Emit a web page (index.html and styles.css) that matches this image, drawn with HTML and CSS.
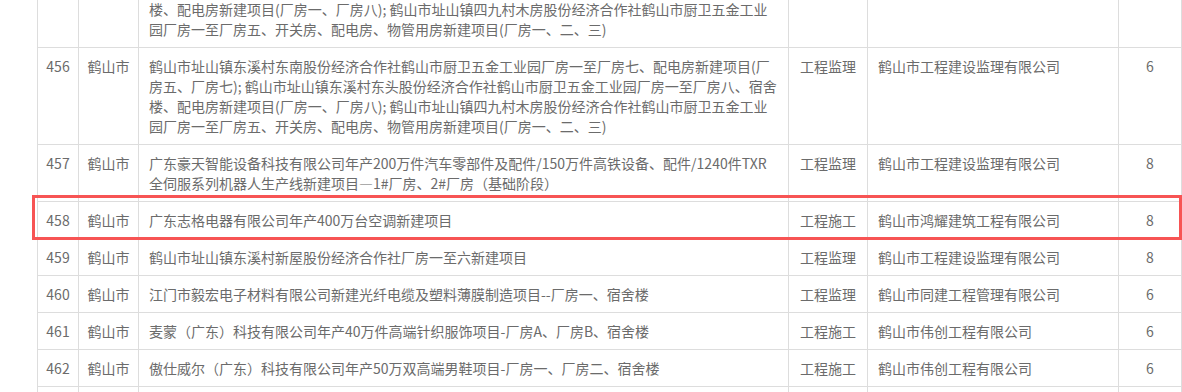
FILE: index.html
```html
<!DOCTYPE html>
<html lang="zh-CN">
<head>
<meta charset="utf-8">
<title>项目列表</title>
<link rel="stylesheet" href="styles.css">
</head>
<body>
<div class="wrap">
  <table class="list">
    <colgroup>
      <col class="c-no"><col class="c-city"><col class="c-proj"><col class="c-type"><col class="c-comp"><col class="c-num">
    </colgroup>
    <tbody>
      <tr class="partial">
        <td class="ctr"></td>
        <td class="ctr"></td>
        <td class="proj"><span class="ln">楼、配电房新建项目(厂房一、厂房八); 鹤山市址山镇四九村木房股份经济合作社鹤山市厨卫五金工业</span><br><span class="ln">园厂房一至厂房五、开关房、配电房、物管用房新建项目(厂房一、二、三)</span></td>
        <td class="ctr"></td>
        <td></td>
        <td class="ctr"></td>
      </tr>
      <tr>
        <td class="ctr">456</td>
        <td class="ctr">鹤山市</td>
        <td class="proj"><span class="ln">鹤山市址山镇东溪村东南股份经济合作社鹤山市厨卫五金工业园厂房一至厂房七、配电房新建项目(厂</span><br><span class="ln">房五、厂房七); 鹤山市址山镇东溪村东头股份经济合作社鹤山市厨卫五金工业园厂房一至厂房八、宿舍</span><br><span class="ln">楼、配电房新建项目(厂房一、厂房八); 鹤山市址山镇四九村木房股份经济合作社鹤山市厨卫五金工业</span><br><span class="ln">园厂房一至厂房五、开关房、配电房、物管用房新建项目(厂房一、二、三)</span></td>
        <td class="ctr">工程监理</td>
        <td>鹤山市工程建设监理有限公司</td>
        <td class="ctr">6</td>
      </tr>
      <tr>
        <td class="ctr">457</td>
        <td class="ctr">鹤山市</td>
        <td class="proj"><span class="ln">广东豪天智能设备科技有限公司年产200万件汽车零部件及配件/150万件高铁设备、配件/1240件TXR</span><br><span class="ln">全伺服系列机器人生产线新建项目—1#厂房、2#厂房（基础阶段）</span></td>
        <td class="ctr">工程监理</td>
        <td>鹤山市工程建设监理有限公司</td>
        <td class="ctr">8</td>
      </tr>
      <tr>
        <td class="ctr">458</td>
        <td class="ctr">鹤山市</td>
        <td class="proj">广东志格电器有限公司年产400万台空调新建项目</td>
        <td class="ctr">工程施工</td>
        <td>鹤山市鸿耀建筑工程有限公司</td>
        <td class="ctr">8</td>
      </tr>
      <tr>
        <td class="ctr">459</td>
        <td class="ctr">鹤山市</td>
        <td class="proj">鹤山市址山镇东溪村新屋股份经济合作社厂房一至六新建项目</td>
        <td class="ctr">工程监理</td>
        <td>鹤山市工程建设监理有限公司</td>
        <td class="ctr">8</td>
      </tr>
      <tr>
        <td class="ctr">460</td>
        <td class="ctr">鹤山市</td>
        <td class="proj">江门市毅宏电子材料有限公司新建光纤电缆及塑料薄膜制造项目--厂房一、宿舍楼</td>
        <td class="ctr">工程监理</td>
        <td>鹤山市同建工程管理有限公司</td>
        <td class="ctr">6</td>
      </tr>
      <tr>
        <td class="ctr">461</td>
        <td class="ctr">鹤山市</td>
        <td class="proj">麦蒙（广东）科技有限公司年产40万件高端针织服饰项目-厂房A、厂房B、宿舍楼</td>
        <td class="ctr">工程施工</td>
        <td>鹤山市伟创工程有限公司</td>
        <td class="ctr">6</td>
      </tr>
      <tr>
        <td class="ctr">462</td>
        <td class="ctr">鹤山市</td>
        <td class="proj">傲仕威尔（广东）科技有限公司年产50万双高端男鞋项目-厂房一、厂房二、宿舍楼</td>
        <td class="ctr">工程施工</td>
        <td>鹤山市伟创工程有限公司</td>
        <td class="ctr">6</td>
      </tr>
      <tr class="tail">
        <td></td><td></td><td></td><td></td><td></td><td></td>
      </tr>
    </tbody>
  </table>
  <div class="highlight"></div>
</div>
</body>
</html>
```
FILE: styles.css
```css
html, body {
  margin: 0;
  padding: 0;
  overflow: hidden;
  background: #ffffff;
}

.wrap {
  position: relative;
  margin-top: -2px;
  padding-left: 37px;
}

.list {
  border-collapse: collapse;
  table-layout: fixed;
  width: 1144px;
  font-family: "Noto Sans CJK SC", "Microsoft YaHei", sans-serif;
  font-size: 14px;
  line-height: 20px;
  color: #6b6b6b;
}

.c-no { width: 41px; }
.c-city { width: 60px; }
.c-proj { width: 650px; }
.c-type { width: 79px; }
.c-comp { width: 251px; }
.c-num { width: 63px; }

.list td {
  border: 1px solid #dddddd;
  padding: 8px 10px;
  vertical-align: top;
  text-align: left;
  white-space: nowrap;
  overflow: hidden;
}

.list td.ctr {
  text-align: center;
  padding-left: 0;
  padding-right: 0;
}

.list td.proj {
  padding-right: 0;
}

.list .partial td {
  padding-top: 0;
}

.list .tail td {
  height: 20px;
}

.ln {
  white-space: nowrap;
}

.highlight {
  position: absolute;
  left: 32px;
  top: 197px;
  width: 1150px;
  height: 45px;
  box-sizing: border-box;
  border: 3px solid #f75454;
  pointer-events: none;
}
```
